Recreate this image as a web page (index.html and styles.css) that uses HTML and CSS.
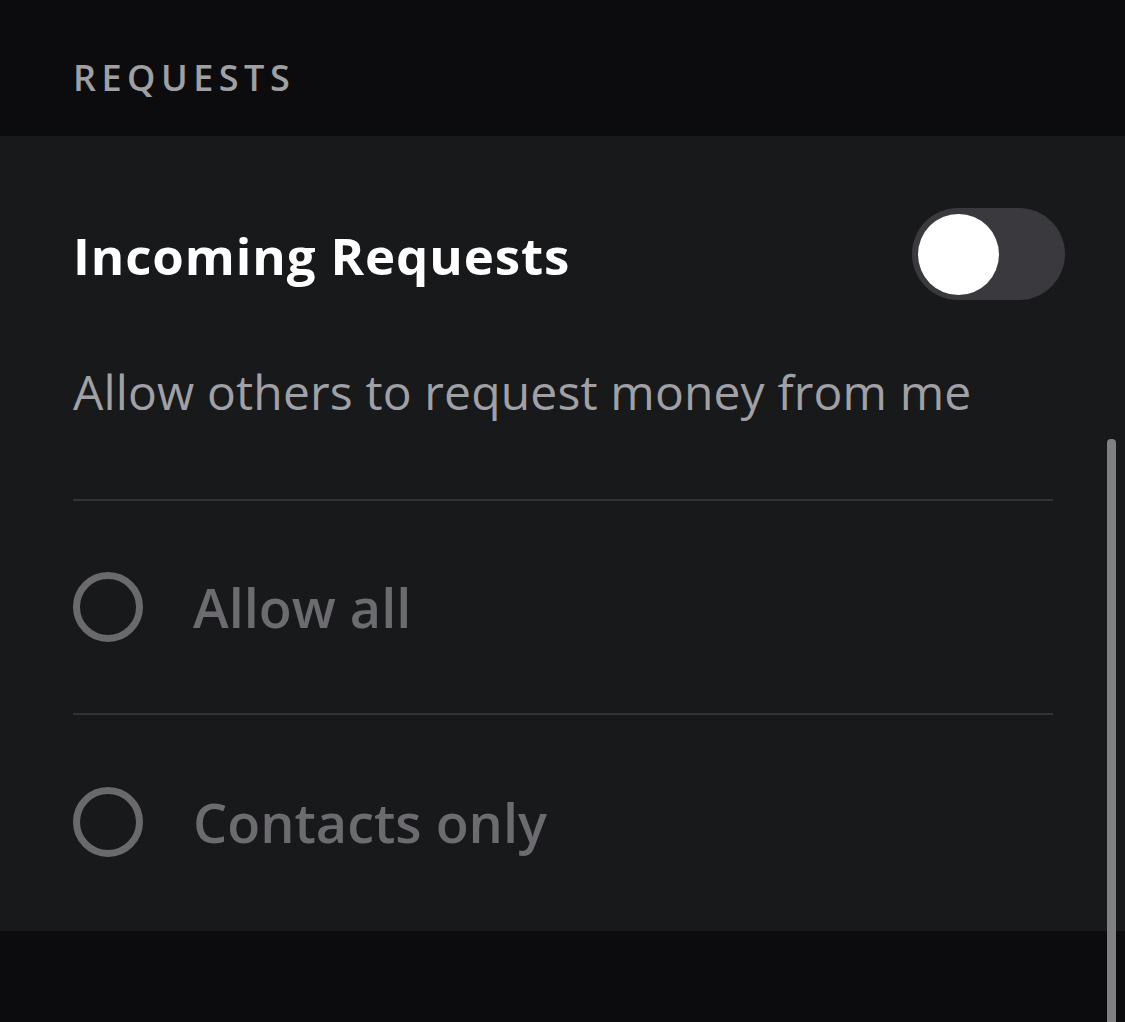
FILE: index.html
```html
<!DOCTYPE html>
<html lang="en">
<head>
    <meta charset="UTF-8">
    <meta name="viewport" content="width=device-width, initial-scale=1.0">
    <title>Requests</title>
    <link rel="stylesheet" href="styles.css">
</head>
<body>
    <header class="section-head">
        <h2>REQUESTS</h2>
    </header>

    <main class="card">
        <div class="toggle-row">
            <h1>Incoming Requests</h1>
            <div class="toggle">
                <span class="knob"></span>
            </div>
        </div>
        <p class="desc">Allow others to request money from me</p>

        <div class="option">
            <span class="radio"></span>
            <span class="label">Allow all</span>
        </div>
        <div class="option">
            <span class="radio"></span>
            <span class="label">Contacts only</span>
        </div>
    </main>

    <div class="scrollbar"></div>
</body>
</html>
```
FILE: styles.css
```css
/* Page */
body {
    margin: 0;
    height: 1022px;
    overflow: hidden;
    background-color: #0c0c0e;
    font-family: "Open Sans", sans-serif;
    position: relative;
}

/* Section header */
.section-head {
    height: 136px;
    padding-left: 73px;
    box-sizing: border-box;
}

.section-head h2 {
    margin: 0;
    padding-top: 58px;
    font-size: 36px;
    font-weight: 600;
    letter-spacing: 5.5px;
    color: #a0a0a3;
    line-height: 40px;
}

/* Card */
.card {
    background-color: #18191b;
    padding: 0 72px 0 73px;
    height: 795px;
    box-sizing: border-box;
}

.toggle-row {
    display: flex;
    align-items: center;
    justify-content: space-between;
    padding-top: 72px;
    margin-right: -12px;
}

.toggle-row h1 {
    margin: 0;
    font-size: 51px;
    line-height: 60px;
    font-weight: 700;
    letter-spacing: 0.9px;
    color: #ffffff;
    position: relative;
    top: 1px;
}

.toggle {
    width: 153px;
    height: 92px;
    border-radius: 46px;
    background-color: #3a3a3e;
    display: flex;
    align-items: center;
    padding-left: 6px;
    box-sizing: border-box;
}

.knob {
    width: 81px;
    height: 81px;
    border-radius: 50%;
    background-color: #ffffff;
}

.desc {
    margin: 0;
    padding: 64px 0 79px;
    font-size: 48px;
    line-height: 56px;
    letter-spacing: 0.15px;
    color: #a0a0a5;
    border-bottom: 2px solid #333336;
}

.option {
    display: flex;
    align-items: center;
    height: 214px;
    box-sizing: border-box;
    border-bottom: 2px solid #333336;
}

.option:last-child {
    border-bottom: none;
}

.radio {
    width: 70px;
    height: 70px;
    border: 7px solid #6a6a6d;
    border-radius: 50%;
    box-sizing: border-box;
    margin-right: 50px;
}

.label {
    font-size: 54px;
    font-weight: 600;
    color: #6c6c70;
}

/* Scrollbar overlay */
.scrollbar {
    position: absolute;
    left: 1107px;
    top: 439px;
    width: 9px;
    height: 600px;
    border-radius: 4px;
    background-color: #808083;
}
```
